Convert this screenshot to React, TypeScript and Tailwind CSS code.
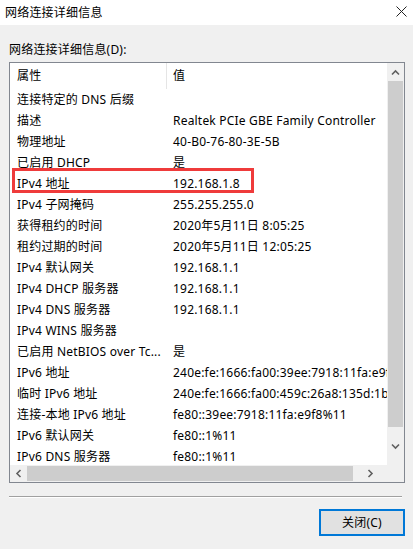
import React from "react";

const ROWS: [string, string][] = [
  ["连接特定的 DNS 后缀", ""],
  ["描述", "Realtek PCIe GBE Family Controller"],
  ["物理地址", "40-B0-76-80-3E-5B"],
  ["已启用 DHCP", "是"],
  ["IPv4 地址", "192.168.1.8"],
  ["IPv4 子网掩码", "255.255.255.0"],
  ["获得租约的时间", "2020年5月11日 8:05:25"],
  ["租约过期的时间", "2020年5月11日 12:05:25"],
  ["IPv4 默认网关", "192.168.1.1"],
  ["IPv4 DHCP 服务器", "192.168.1.1"],
  ["IPv4 DNS 服务器", "192.168.1.1"],
  ["IPv4 WINS 服务器", ""],
  ["已启用 NetBIOS over Tc...", "是"],
  ["IPv6 地址", "240e:fe:1666:fa00:39ee:7918:11fa:e9f8%11"],
  ["临时 IPv6 地址", "240e:fe:1666:fa00:459c:26a8:135d:1b4c%11"],
  ["连接-本地 IPv6 地址", "fe80::39ee:7918:11fa:e9f8%11"],
  ["IPv6 默认网关", "fe80::1%11"],
  ["IPv6 DNS 服务器", "fe80::1%11"],
];

const FONT = "font-['Noto_Sans','Noto_Sans_CJK_SC',sans-serif]";

function Chevron({ dir }: { dir: "up" | "down" | "left" | "right" }) {
  const rot = { up: 0, right: 90, down: 180, left: 270 }[dir];
  return (
    <svg width="9" height="9" viewBox="0 0 9 9" style={{ transform: `rotate(${rot}deg)` }}>
      <path d="M1 6.5 L4.5 3 L8 6.5" fill="none" stroke="#606060" strokeWidth="1.6" />
    </svg>
  );
}

export default function App() {
  return (
    <div className={`w-[413px] h-[549px] bg-[#f0f0f0] flex flex-col text-[12px] tracking-[0.2px] text-black ${FONT}`}>
      {/* title bar */}
      <div className="h-[25px] bg-white flex items-center justify-between pl-[5px] pr-[6px] shrink-0">
        <span className="text-[12px] leading-none">网络连接详细信息</span>
        <svg width="11" height="11" viewBox="0 0 11 11" className="mb-[3px]">
          <path d="M0.5 0.5 L10.5 10.5 M10.5 0.5 L0.5 10.5" stroke="#222" strokeWidth="1" />
        </svg>
      </div>

      <div className="pl-[9px] pr-[8px] pt-[15px] flex flex-col">
        <div className="h-[20px] leading-[20px]">网络连接详细信息(D):</div>

        {/* list view */}
        <div className="mt-[2px] w-[396px] h-[421px] border border-[#828790] bg-white flex flex-col">
          <div className="flex h-[402px]">
            <div className="relative flex-1 overflow-hidden">
              <div className="flex h-[26px] items-center">
                <div className="w-[157px] pl-[7px] border-r border-[#e5e5e5] h-full flex items-center">属性</div>
                <div className="pl-[6px]">值</div>
              </div>
              {ROWS.map(([k, v]) => (
                <div key={k} className="flex h-[21px] items-center whitespace-nowrap">
                  <div className="w-[157px] shrink-0 pl-[7px] pr-[2px] truncate">{k}</div>
                  <div className="pl-[6px]">{v}</div>
                </div>
              ))}
              <div className="absolute left-[2px] top-[105px] w-[242px] h-[25px] border-[3px] border-[#ef3b3b]" />
            </div>
            {/* vertical scrollbar */}
            <div className="w-[17px] bg-[#f0f0f0] flex flex-col">
              <div className="h-[18px] flex items-center justify-center">
                <Chevron dir="up" />
              </div>
              <div className="h-[346px] mx-[1px] bg-[#cdcdcd]" />
              <div className="flex-1 flex items-center justify-center">
                <Chevron dir="down" />
              </div>
            </div>
          </div>
          {/* horizontal scrollbar */}
          <div className="flex h-[17px]">
            <div className="flex-1 bg-[#f0f0f0] flex items-center">
              <div className="w-[17px] flex items-center justify-center">
                <Chevron dir="left" />
              </div>
              <div className="w-[326px] h-[15px] bg-[#cdcdcd]" />
              <div className="flex-1 flex items-center justify-center">
                <Chevron dir="right" />
              </div>
            </div>
            <div className="w-[17px] bg-[#f0f0f0]" />
          </div>
        </div>

        <div className="mt-[13px] w-[393px] border-t border-[#a0a0a0] border-b border-b-white" />

        <div className="flex justify-end mt-[11px]">
          <button className="w-[86px] h-[27px] border-2 border-[#0078d7] bg-[#e1e1e1] text-[12px] flex items-center justify-center">
            关闭(C)
          </button>
        </div>
      </div>
    </div>
  );
}
